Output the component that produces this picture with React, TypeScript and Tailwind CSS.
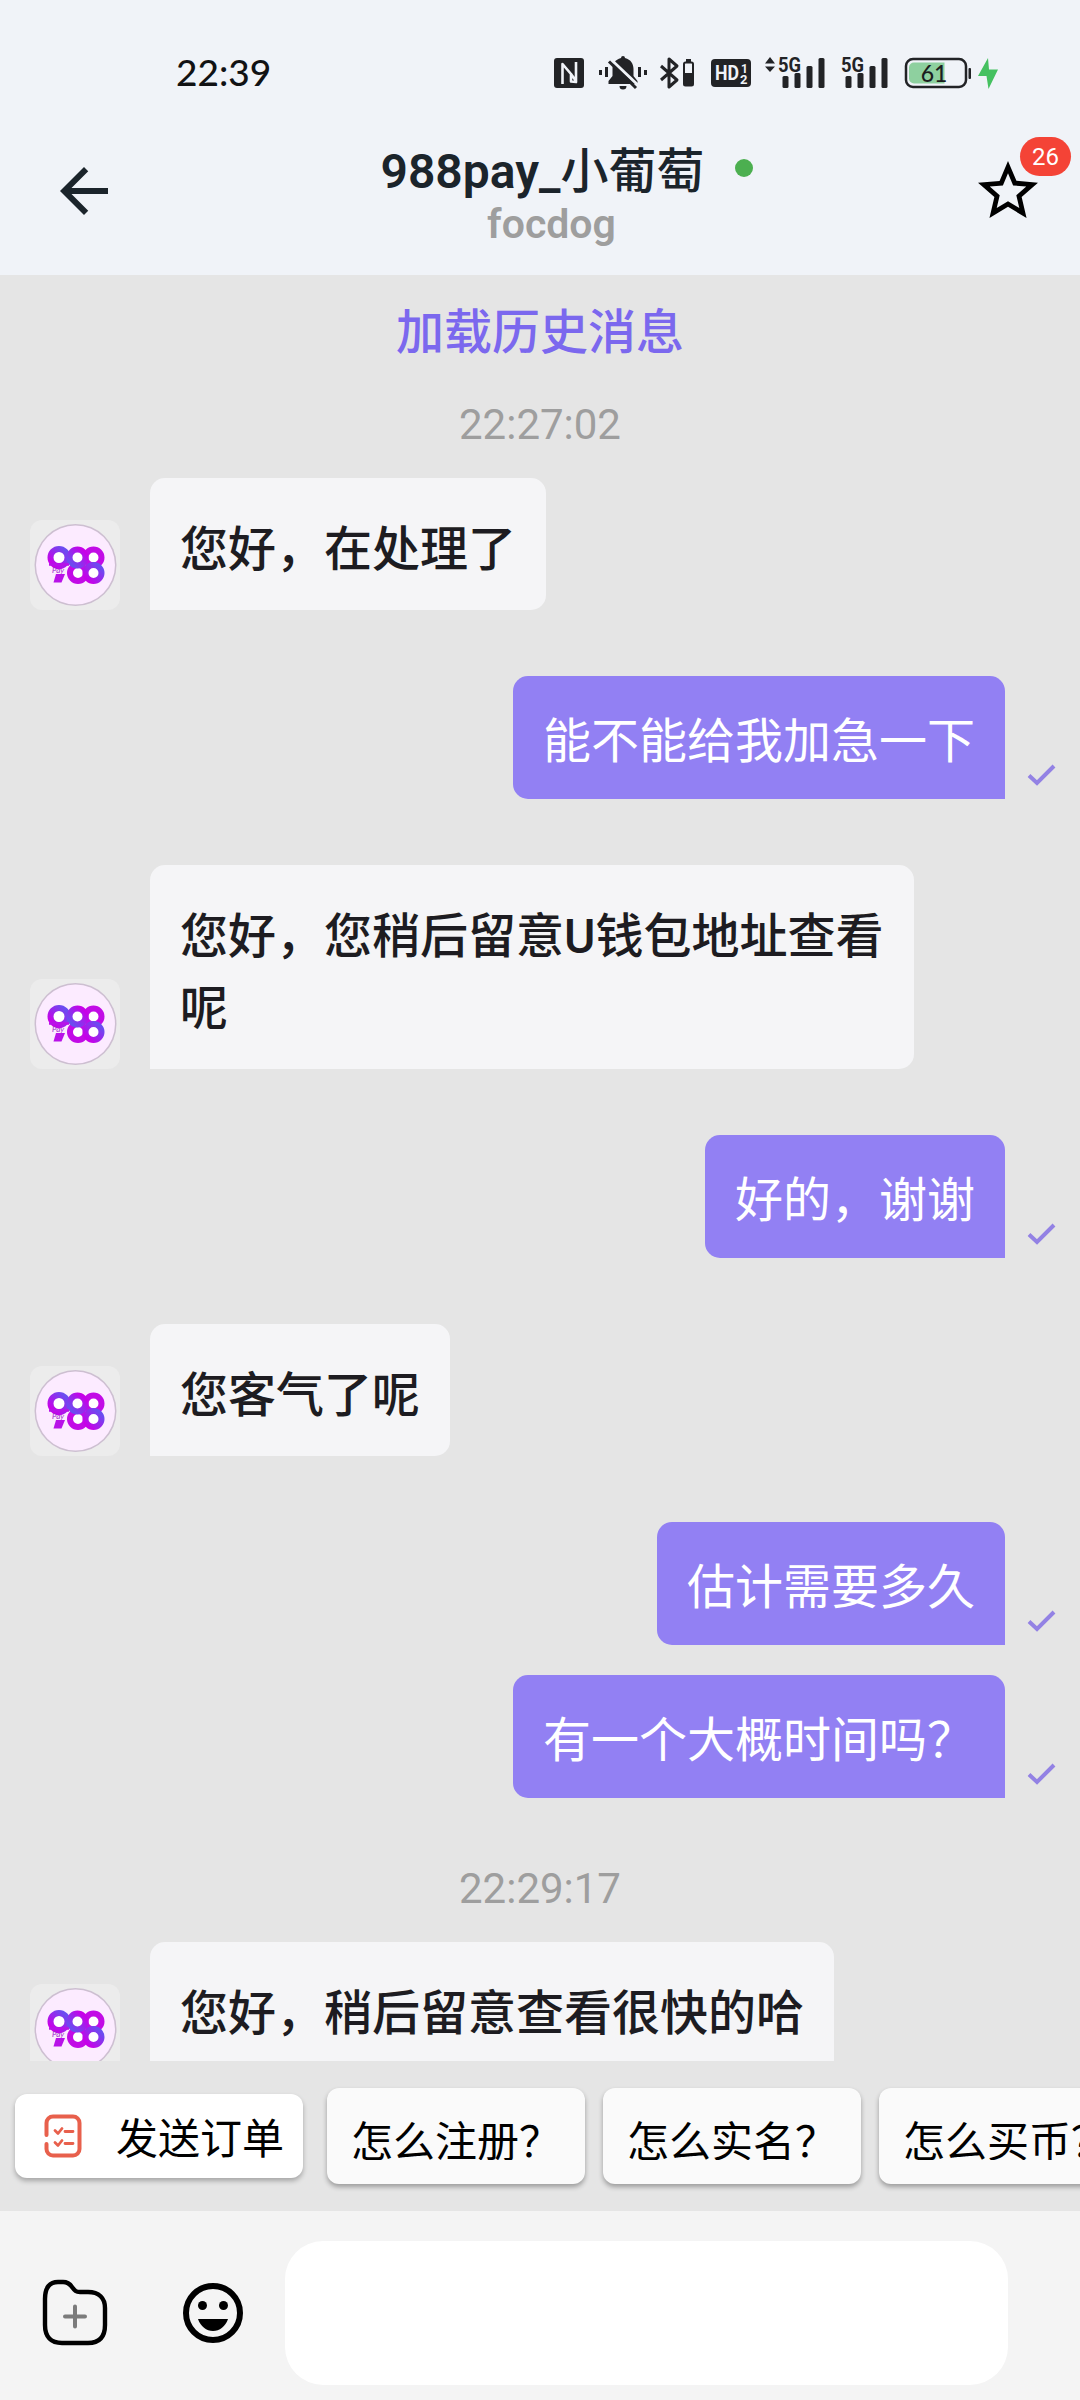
import React from 'react';
import { MdArrowBack, MdOutlineStarBorder } from 'react-icons/md';

interface ChatItem {
  kind: 'time' | 'in' | 'out';
  text: string;
  spacing: string;
}

const items: ChatItem[] = [
  { kind: 'in', text: '您好，在处理了', spacing: 'mt-[22px]' },
  { kind: 'out', text: '能不能给我加急一下', spacing: 'mt-[66px]' },
  { kind: 'in', text: '您好，您稍后留意U钱包地址查看呢', spacing: 'mt-[66px]' },
  { kind: 'out', text: '好的，谢谢', spacing: 'mt-[66px]' },
  { kind: 'in', text: '您客气了呢', spacing: 'mt-[66px]' },
  { kind: 'out', text: '估计需要多久', spacing: 'mt-[66px]' },
  { kind: 'out', text: '有一个大概时间吗？', spacing: 'mt-[30px]' },
  { kind: 'time', text: '22:29:17', spacing: 'mt-[60px]' },
  { kind: 'in', text: '您好，稍后留意查看很快的哈', spacing: 'mt-[22px]' },
];

const quickReplies = ['怎么注册？', '怎么实名？', '怎么买币？'];

const signalBars = [
  { x: 0, h: 12 },
  { x: 12, h: 15 },
  { x: 24, h: 22 },
  { x: 36, h: 30 },
];

const Signal = ({ arrows }: { arrows?: boolean }) => (
  <svg width="62" height="44" viewBox="0 -5 62 44" fill="#222326">
    {arrows && <path d="M0 7.5 5 1l5 6.500zM0 10.500h10L5 16z" />}
    <text x="13" y="15.500" fontSize="20.500" fontWeight="700" fontFamily="Roboto, sans-serif" textLength="23" lengthAdjust="spacingAndGlyphs">5G</text>
    {signalBars.map((b) => (
      <rect key={b.x} x={17.500 + b.x} y={32 - b.h} width="6" height={b.h} rx="1.500" />
    ))}
  </svg>
);

const StatusBar = () => (
  <div className="flex h-[120px] items-center justify-between pt-[26px] pr-[81px] pl-[176px]">
    <span className="mb-1 font-[Lato,sans-serif] text-[37px] leading-none font-medium text-[#111214]">22:39</span>
    <div className="flex items-center">
      <svg width="30" height="30" viewBox="0 0 30 30">
        <rect width="30" height="30" rx="3" fill="#222326" />
        <path d="M8.500 26V6L17 16v7.500L22 24V4M17 16l5 7" fill="none" stroke="#f0f3f8" strokeWidth="2.600" strokeLinejoin="round" />
      </svg>
      <svg className="ml-[14px]" width="50" height="34" viewBox="0 0 50 34" fill="#222326">
        <rect x="1" y="14" width="3" height="5" />
        <rect x="7" y="11" width="3" height="10" />
        <rect x="40" y="11" width="3" height="10" />
        <rect x="46" y="14" width="3" height="5" />
        <path d="M23 2a2 2 0 0 1 4 0c6 1.500 8.500 6 8.500 11v7l4 5v3H10.500v-3l4-5v-7c0-5 2.500-9.500 8.500-11zM21.500 30h7a3.500 3.500 0 0 1-7 0z" />
        <path d="M13 3.500 42 31" stroke="#f0f3f8" strokeWidth="3" />
        <path d="M11 5.500 38 32" stroke="#222326" strokeWidth="3" />
      </svg>
      <svg className="ml-[11px]" width="36" height="34" viewBox="0 0 36 34">
        <path d="M2 10 18 24 10 31V3l8 7L2 24" fill="none" stroke="#222326" strokeWidth="3" strokeLinejoin="round" />
        <rect x="25" y="6.500" width="9" height="23" rx="1.500" fill="none" stroke="#222326" strokeWidth="2" />
        <path d="M27 3h5v3h-5zM25 17h9v12.500h-9z" fill="#222326" />
      </svg>
      <svg className="ml-[16px]" width="40" height="28" viewBox="0 0 40 28">
        <rect width="40" height="28" rx="4" fill="#222326" />
        <g fill="#f0f3f8" fontFamily="Roboto, sans-serif" fontWeight="700">
          <text x="4" y="21" fontSize="20" textLength="24" lengthAdjust="spacingAndGlyphs">HD</text>
          <text x="30" y="13.500" fontSize="12">1</text>
          <text x="29" y="24.500" fontSize="13">2</text>
        </g>
      </svg>
      <div className="ml-[14px]"><Signal arrows /></div>
      <div className="ml-[1px]"><Signal /></div>
      <svg className="ml-[14px]" width="95" height="34" viewBox="0 0 95 34">
        <rect x="2" y="3" width="60" height="28" rx="7" fill="none" stroke="#222326" strokeWidth="2.500" />
        <path d="M10 6.500h30.500v21H10a5 5 0 0 1-5-5v-11a5 5 0 0 1 5-5z" fill="#8ed09f" />
        <rect x="64.500" y="12" width="2.500" height="11" rx="1" fill="#222326" />
        <text x="30" y="25.500" fontSize="23" textAnchor="middle" fontFamily="Lato, sans-serif" fontWeight="500" fill="#1c1d20">61</text>
        <path d="M84 2 74 20h8.500L84.500 33 94 13.500h-9z" fill="#45c160" />
      </svg>
    </div>
  </div>
);

const Header = () => (
  <div className="flex h-[155px] items-start justify-between pr-9 pl-12">
    <MdArrowBack className="mt-[35px] size-[72px] text-[#1b242b]" />
    <div className="flex w-[420px] flex-col items-center pt-[24px]">
      <div className="ml-[42px] flex items-center text-[48px] leading-[56px] whitespace-nowrap text-[#1b242b]">
        <span className="font-semibold">988pay_</span>
        <span className="font-medium">小葡萄</span>
        <span className="mb-2 ml-[31px] size-[18px] rounded-full bg-[#4caf50]" />
      </div>
      <div className="ml-[11px] text-[41px] leading-[49px] font-semibold text-[#9e9e9e]">focdog</div>
    </div>
    <div className="relative mt-[35px]">
      <MdOutlineStarBorder className="size-[72px] text-black" />
      <span className="absolute -top-[18px] left-[48px] flex h-[39px] w-[51px] items-center justify-center rounded-full bg-[#f44336] text-[24px] text-white">
        26
      </span>
    </div>
  </div>
);

const Avatar = () => (
  <svg className="shrink-0" width="90" height="90" viewBox="0 0 90 90">
    <defs>
      <linearGradient id="ring" x1="0" y1="1" x2="1" y2="0">
        <stop offset="0.1" stopColor="#c800e8" />
        <stop offset="0.9" stopColor="#6a4df0" />
      </linearGradient>
      <linearGradient id="ringFlip" x1="0" y1="1" x2="1" y2="0">
        <stop offset="0.1" stopColor="#6a4df0" />
        <stop offset="0.9" stopColor="#c800e8" />
      </linearGradient>
    </defs>
    <rect width="90" height="90" rx="12" fill="#ececec" />
    <circle cx="45.500" cy="45" r="41" fill="#cdbfd1" />
    <circle cx="45.500" cy="45" r="39.500" fill="#fcebff" />
    <g fill="#fff" strokeWidth="6">
      <circle cx="48" cy="53" r="8" stroke="#c20be6" />
      <circle cx="63.500" cy="37.500" r="8" stroke="#c20be6" />
      <circle cx="29" cy="37.500" r="8.500" stroke="url(#ring)" />
      <circle cx="47.500" cy="37.500" r="8" stroke="url(#ringFlip)" />
      <circle cx="63.500" cy="53" r="8" stroke="url(#ring)" />
    </g>
    <path d="M19 44.500h20" stroke="#b812e8" strokeWidth="2.500" />
    <path d="M26 54h9l-3.500 8.500h-8z" fill="#b812e8" />
    <text x="22" y="52.500" fontSize="8" fontStyle="italic" fontFamily="Lato, sans-serif" fill="#9c2cc8">Pay</text>
  </svg>
);

const TimeLabel = ({ text }: { text: string }) => (
  <div className="text-center text-[42px] leading-[62px] text-[#9e9e9e]">{text}</div>
);

const Incoming = ({ text }: { text: string }) => (
  <div className="flex items-end gap-[30px] pl-[30px]">
    <Avatar />
    <div className="max-w-[764px] rounded-[15px] rounded-bl-none bg-[#f5f5f7] px-[30px] pt-[36px] pb-[24px] text-[48px] leading-[72px] font-medium text-[#1d1c21]">
      {text}
    </div>
  </div>
);

const Outgoing = ({ text }: { text: string }) => (
  <div className="flex items-end justify-end gap-[22px] pr-[24px]">
    <div className="rounded-[15px] rounded-br-none bg-[#9280f3] px-[30px] pt-[34px] pb-[25px] text-[48px] leading-[64px] font-normal text-white">
      {text}
    </div>
    <svg className="mb-[13px]" width="29" height="22" viewBox="0 0 29 22" fill="none" stroke="#9382e4" strokeWidth="4">
      <path d="M2 11.500 10 19 27 2" />
    </svg>
  </div>
);

const QuickBar = () => (
  <div className="flex h-[150px] shrink-0 items-start overflow-hidden pt-[27px] pl-[15px] text-[42px] whitespace-nowrap text-black">
    <div className="mt-[6px] mr-6 flex h-[84px] w-[288px] shrink-0 items-center rounded-xl bg-white pl-[29px] shadow-[0_3px_5px_rgba(0,0,0,0.28)]">
      <svg width="38" height="44" viewBox="0 0 38 44" fill="none" stroke="#e8604c" strokeLinecap="round" strokeLinejoin="round">
        <path d="M2.500 21V9a6.500 6.500 0 0 1 6.500-6.500h20A6.500 6.500 0 0 1 35.500 9v26a6.500 6.500 0 0 1-6.500 6.500H9A6.500 6.500 0 0 1 2.500 35v-5" strokeWidth="4" />
        <path d="M11 16.500l3 3 4-5M21 17.500h8M11 28.500l3 3 4-5M21 29.500h8" strokeWidth="2.800" />
      </svg>
      <span className="mt-[8px] ml-[34px] leading-[62px]">发送订单</span>
    </div>
    <div className="flex gap-[18px]">
      {quickReplies.map((q) => (
        <div key={q} className="h-24 w-[258px] shrink-0 rounded-xl bg-[#fafafa] p-6 shadow-[0_3px_5px_rgba(0,0,0,0.32)]">
          <div className="h-12 overflow-hidden leading-[62px]">{q}</div>
        </div>
      ))}
    </div>
  </div>
);

const InputBar = () => (
  <div className="flex h-[189px] shrink-0 items-start bg-[#f4f4f4] pt-[30px] pl-[41px]">
    <svg className="mt-[38px]" width="67" height="67" viewBox="0 0 67 67" fill="none" strokeLinecap="round" strokeLinejoin="round">
      <path d="M4 20C4 8 9 3 17 3h5c5 0 7 2 9 5 3 4 4 5 8 5h8c11 0 17 6 17 16v17c0 12-6 18-17 18H21C10 64 4 58 4 46z" strokeWidth="4.400" stroke="black" />
      <path d="M34 27.500v20M24 37.500h20" stroke="#7b7b7b" strokeWidth="4" />
    </svg>
    <svg className="mt-[42px] ml-[75px]" width="60" height="60" viewBox="0 0 60 60">
      <circle cx="30" cy="30" r="27" fill="none" stroke="black" strokeWidth="6" />
      <circle cx="19.500" cy="22.500" r="4.500" />
      <circle cx="40.500" cy="22.500" r="4.500" />
      <path d="M15 36h30c-2.500 7.500-8.500 12-15 12s-12.500-4.500-15-12z" />
    </svg>
    <div className="ml-[42px] h-36 w-[723px] rounded-[38px] bg-white" />
  </div>
);

const App: React.FC = () => {
  return (
    <div className="flex h-[2400px] w-[1080px] flex-col overflow-hidden bg-[#e5e5e5] font-[Roboto,'Noto_Sans_CJK_SC',sans-serif]">
      <div className="shrink-0 bg-[#f0f3f8]">
        <StatusBar />
        <Header />
      </div>
      <div className="min-h-0 flex-1 overflow-hidden pt-[23px]">
        <div className="text-center text-[48px] leading-[70px] font-medium text-[#7b68ee]">加载历史消息</div>
        <div className="mt-[26px]">
          <TimeLabel text="22:27:02" />
        </div>
        {items.map((item) => (
          <div key={item.text} className={item.spacing}>
            {item.kind === 'time' && <TimeLabel text={item.text} />}
            {item.kind === 'in' && <Incoming text={item.text} />}
            {item.kind === 'out' && <Outgoing text={item.text} />}
          </div>
        ))}
      </div>
      <QuickBar />
      <InputBar />
    </div>
  );
};

export default App;
